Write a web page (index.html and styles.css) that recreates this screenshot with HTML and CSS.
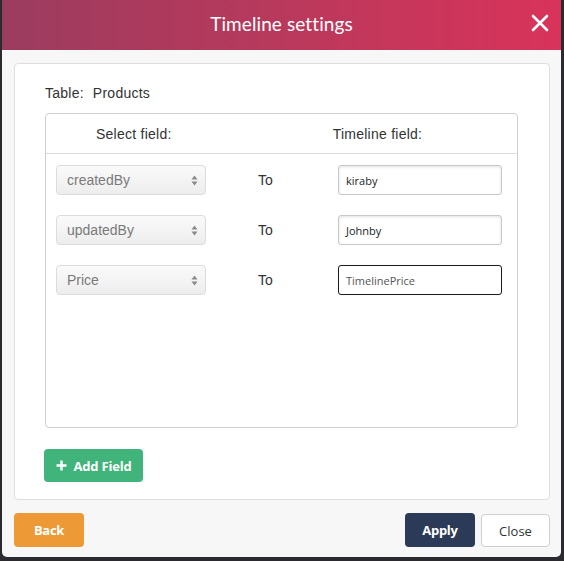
FILE: index.html
```html
<!DOCTYPE html>
<html>
<head>
<meta charset="utf-8">
<link rel="stylesheet" href="styles.css">
</head>
<body>
<div class="modal">
  <div class="modal-header">
    <span class="title">Timeline settings</span>
    <span class="close-x">
      <svg width="18" height="18" viewBox="0 0 18 18"><path d="M2 2L16 16M16 2L2 16" stroke="#fff" stroke-width="2.6" stroke-linecap="round"/></svg>
    </span>
  </div>
  <div class="modal-body">
    <div class="card">
      <div class="table-name"><span class="lbl">Table:</span><span>Products</span></div>
      <div class="map-box">
        <div class="map-head">
          <span class="h-select">Select field:</span>
          <span class="h-timeline">Timeline field:</span>
        </div>
        <div class="map-rows">
          <div class="map-row">
            <div class="select"><span>createdBy</span><span class="arrows"><svg width="7" height="11" viewBox="0 0 7 11"><path d="M3.5 0.5L6.5 4.5H0.5Z M3.5 10.5L6.5 6.5H0.5Z" fill="#8a8a8a"/></svg></span></div>
            <span class="to">To</span>
            <div class="input">kiraby</div>
          </div>
          <div class="map-row">
            <div class="select"><span>updatedBy</span><span class="arrows"><svg width="7" height="11" viewBox="0 0 7 11"><path d="M3.5 0.5L6.5 4.5H0.5Z M3.5 10.5L6.5 6.5H0.5Z" fill="#8a8a8a"/></svg></span></div>
            <span class="to">To</span>
            <div class="input">Johnby</div>
          </div>
          <div class="map-row">
            <div class="select"><span>Price</span><span class="arrows"><svg width="7" height="11" viewBox="0 0 7 11"><path d="M3.5 0.5L6.5 4.5H0.5Z M3.5 10.5L6.5 6.5H0.5Z" fill="#8a8a8a"/></svg></span></div>
            <span class="to">To</span>
            <div class="input focused">TimelinePrice</div>
          </div>
        </div>
      </div>
      <button class="btn btn-add"><svg width="11" height="11" viewBox="0 0 11 11"><path d="M5.5 0.5V10.5M0.5 5.5H10.5" stroke="#fff" stroke-width="2.4"/></svg><span>Add Field</span></button>
    </div>
  </div>
  <div class="modal-footer">
    <button class="btn btn-back">Back</button>
    <div class="right-btns">
      <button class="btn btn-apply">Apply</button>
      <button class="btn btn-close">Close</button>
    </div>
  </div>
</div>
</body>
</html>
```

FILE: styles.css
```css
html, body {
  margin: 0;
  padding: 0;
  background: #2a2a2f;
  width: 564px;
  height: 561px;
  overflow: hidden;
}
.modal {
  margin-left: 2px;
  width: 559px;
  height: 557px;
  background: #f7f7f7;
  border-radius: 0 0 5px 5px;
  display: flex;
  flex-direction: column;
  font-family: "Liberation Sans", Arial, sans-serif;
  overflow: hidden;
}
.modal-header {
  height: 50px;
  flex: none;
  background: linear-gradient(90deg, #9b3c5f 0%, #b9395c 50%, #d9335a 100%);
  display: flex;
  align-items: center;
  justify-content: center;
  position: relative;
}
.title {
  color: #fff;
  font-family: Lato, "Noto Sans", sans-serif;
  font-size: 19px;
  letter-spacing: 0.1px;
  margin-top: -4px;
}
.close-x {
  position: absolute;
  right: 12px;
  top: 14px;
  width: 18px;
  height: 18px;
}
.close-x svg { display: block; }
.modal-body {
  padding: 13px 9px 0 12px;
}
.card {
  background: #fff;
  border: 1px solid #dedede;
  border-radius: 4px;
  height: 435px;
  padding: 0 31px 0 30px;
  box-sizing: content-box;
  width: 473px;
}
.table-name {
  font-size: 14px;
  letter-spacing: 0.25px;
  color: #333;
  height: 49px;
  box-sizing: border-box;
  padding-top: 8px;
  display: flex;
  align-items: center;
}
.table-name .lbl { margin-right: 9px; }
.map-box {
  border: 1px solid #cfcfcf;
  border-radius: 4px;
  height: 313px;
}
.map-head {
  height: 39px;
  border-bottom: 1px solid #dcdcdc;
  display: flex;
  align-items: center;
  font-size: 14px;
  letter-spacing: 0.25px;
  color: #333;
}
.h-select { margin-left: 50px; }
.h-timeline { margin-left: 161px; }
.map-rows {
  padding: 11px 16px 0 10px;
  display: flex;
  flex-direction: column;
  gap: 20px;
}
.map-row {
  display: flex;
  align-items: center;
  height: 30px;
}
.select {
  flex: none;
  width: 150px;
  height: 30px;
  box-sizing: border-box;
  border: 1px solid #dcdcdc;
  border-radius: 4px;
  background: linear-gradient(#fafafa, #ededed);
  display: flex;
  align-items: center;
  justify-content: space-between;
  padding: 0 7px 0 10px;
  font-size: 14px;
  color: #7a7a7a;
}
.arrows svg { display: block; }
.to {
  flex: none;
  font-size: 14px;
  color: #333;
  margin-left: 52px;
  width: 80px;
}
.input {
  flex: none;
  width: 164px;
  height: 30px;
  box-sizing: border-box;
  border: 1px solid #c9c9c9;
  border-radius: 3px;
  box-shadow: inset 0 1px 3px rgba(0,0,0,0.12);
  display: flex;
  align-items: center;
  padding-left: 7px;
  font-family: "Open Sans", sans-serif;
  font-size: 11px;
  color: #222;
}
.input.focused {
  border-color: #1a1a1a;
  color: #555;
  box-shadow: none;
}
.btn {
  border: none;
  border-radius: 4px;
  font-family: "Open Sans", sans-serif;
  font-size: 13px;
  cursor: pointer;
  padding: 0;
}
.btn-add {
  margin-top: 21px;
  margin-left: -1px;
  width: 99px;
  height: 33px;
  background: #40b47a;
  color: #fff;
  font-weight: 700;
  display: flex;
  align-items: center;
  justify-content: center;
  gap: 7px;
  letter-spacing: -0.2px;
}
.btn-add svg { display: block; }
.modal-footer {
  display: flex;
  justify-content: space-between;
  padding: 13px 11px 0 12px;
}
.btn-back {
  width: 70px;
  height: 34px;
  background: #ed9936;
  color: #fff;
  font-weight: 700;
  letter-spacing: -0.3px;
}
.right-btns {
  display: flex;
  gap: 6px;
}
.btn-apply {
  width: 70px;
  height: 34px;
  background: #2b3a56;
  color: #fff;
  font-weight: 700;
  letter-spacing: -0.3px;
}
.btn-close {
  width: 69px;
  height: 33px;
  background: #fff;
  border: 1px solid #cfcfcf;
  color: #333;
  box-sizing: border-box;
  margin-top: 1px;
}
```
